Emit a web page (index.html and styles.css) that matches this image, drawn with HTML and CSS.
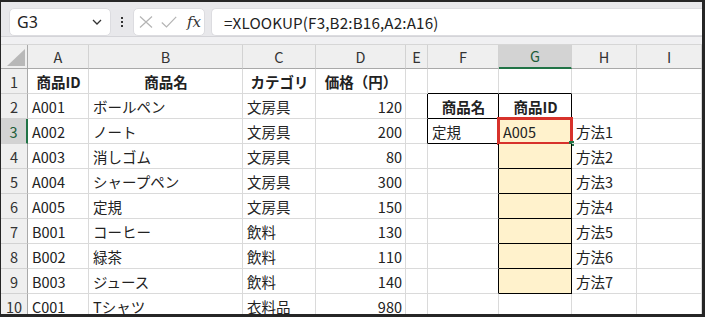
FILE: index.html
```html
<!DOCTYPE html>
<html lang="ja">
<head>
<meta charset="utf-8">
<link rel="stylesheet" href="styles.css">
</head>
<body>
<div class="frame">
  <div class="toolbar">
    <div class="namebox">
      <span class="name">G3</span>
      <svg class="chev" width="10" height="6" viewBox="0 0 10 6"><path d="M1 1 L5 5 L9 1" fill="none" stroke="#333" stroke-width="1.3"/></svg>
    </div>
    <div class="dots"><i></i><i></i><i></i></div>
    <div class="fxbox">
      <svg width="14" height="12" viewBox="0 0 14 12"><path d="M1 0.5 L13 11.5 M13 0.5 L1 11.5" stroke="#b4b4b4" stroke-width="1.2" fill="none"/></svg>
      <svg width="16" height="12" viewBox="0 0 16 12"><path d="M0.8 6.5 L5.5 11 L15.2 0.8" stroke="#b4b4b4" stroke-width="1.2" fill="none"/></svg>
      <span class="fx">fx</span>
    </div>
    <div class="formula">=XLOOKUP(F3,B2:B16,A2:A16)</div>
  </div>
  <div class="band"></div>
  <div class="sheet">
    <div class="corner"><svg width="18" height="17" viewBox="0 0 18 17"><path d="M0 17 L18 17 L18 0 Z" fill="#b8b8b8"/></svg></div>
    <div class="ch">A</div><div class="ch">B</div><div class="ch">C</div><div class="ch">D</div><div class="ch">E</div><div class="ch">F</div><div class="ch sel">G</div><div class="ch">H</div><div class="ch">I</div>

    <div class="rh">1</div>
    <div class="c b ctr">商品ID</div><div class="c b ctr">商品名</div><div class="c b ctr">カテゴリ</div><div class="c b ctr">価格（円）</div><div class="c"></div><div class="c kb"></div><div class="c kb"></div><div class="c"></div><div class="c"></div>

    <div class="rh">2</div>
    <div class="c">A001</div><div class="c">ボールペン</div><div class="c">文房具</div><div class="c num">120</div><div class="c kr"></div><div class="c b ctr kr kb">商品名</div><div class="c b ctr kr kb">商品ID</div><div class="c"></div><div class="c"></div>

    <div class="rh rsel">3</div>
    <div class="c">A002</div><div class="c">ノート</div><div class="c">文房具</div><div class="c num">200</div><div class="c kr"></div><div class="c kr kb">定規</div><div class="c kr kb fill active">A005<span class="redbox"></span><span class="handle"></span></div><div class="c">方法1</div><div class="c"></div>

    <div class="rh">4</div>
    <div class="c">A003</div><div class="c">消しゴム</div><div class="c">文房具</div><div class="c num">80</div><div class="c"></div><div class="c kr"></div><div class="c kr kb fill"></div><div class="c">方法2</div><div class="c"></div>

    <div class="rh">5</div>
    <div class="c">A004</div><div class="c">シャープペン</div><div class="c">文房具</div><div class="c num">300</div><div class="c"></div><div class="c kr"></div><div class="c kr kb fill"></div><div class="c">方法3</div><div class="c"></div>

    <div class="rh">6</div>
    <div class="c">A005</div><div class="c">定規</div><div class="c">文房具</div><div class="c num">150</div><div class="c"></div><div class="c kr"></div><div class="c kr kb fill"></div><div class="c">方法4</div><div class="c"></div>

    <div class="rh">7</div>
    <div class="c">B001</div><div class="c">コーヒー</div><div class="c">飲料</div><div class="c num">130</div><div class="c"></div><div class="c kr"></div><div class="c kr kb fill"></div><div class="c">方法5</div><div class="c"></div>

    <div class="rh">8</div>
    <div class="c">B002</div><div class="c">緑茶</div><div class="c">飲料</div><div class="c num">110</div><div class="c"></div><div class="c kr"></div><div class="c kr kb fill"></div><div class="c">方法6</div><div class="c"></div>

    <div class="rh">9</div>
    <div class="c">B003</div><div class="c">ジュース</div><div class="c">飲料</div><div class="c num">140</div><div class="c"></div><div class="c kr"></div><div class="c kr kb fill"></div><div class="c">方法7</div><div class="c"></div>

    <div class="rh">10</div>
    <div class="c">C001</div><div class="c">Tシャツ</div><div class="c">衣料品</div><div class="c num">980</div><div class="c"></div><div class="c"></div><div class="c"></div><div class="c"></div><div class="c"></div>
  </div>
</div>
</body>
</html>
```

FILE: styles.css
```css
* { box-sizing: border-box; }
html, body { margin: 0; padding: 0; }
body {
  width: 705px;
  height: 317px;
  overflow: hidden;
  background: #262626;
  font-family: "Noto Sans CJK JP", "Noto Sans", sans-serif;
}
.frame {
  width: 705px;
  height: 317px;
  border-top: 2px solid #262626;
  border-left: 1px solid #262626;
  border-right: 3px solid #262626;
  border-bottom: 3px solid #262626;
  background: #ffffff;
  overflow: hidden;
  display: flex;
  flex-direction: column;
}
.toolbar {
  flex-shrink: 0;
  background: #e8e8eb;
  display: flex;
  align-items: stretch;
  height: 35px;
  padding: 6px 0 0 8px;
  border-bottom: 1px solid #d4d4d8;
}
.namebox {
  width: 102px;
  background: #fff;
  border: 1px solid #dcdce0;
  border-radius: 5px;
  display: flex;
  align-items: center;
  justify-content: space-between;
  padding: 0 8px 0 7px;
  color: #222;
}
.name { font-family: "Noto Sans", sans-serif; font-size: 16px; }
.dots {
  width: 22px;
  display: flex;
  flex-direction: column;
  align-items: center;
  justify-content: center;
  gap: 2px;
}
.dots i { display: block; width: 2px; height: 2px; background: #333; }
.fxbox {
  width: 72px;
  background: #fff;
  border: 1px solid #dcdce0;
  border-radius: 5px;
  display: flex;
  align-items: center;
  padding: 0 0 0 5px;
  gap: 8px;
}
.fx {
  font-family: "DejaVu Serif", "Liberation Serif", serif;
  font-style: italic;
  font-size: 15px;
  color: #333;
  margin-left: 2px;
}
.formula {
  flex: 1;
  margin-left: 6px;
  background: #fff;
  border: 1px solid #dcdce0;
  border-right: none;
  border-radius: 5px 0 0 5px;
  display: flex;
  align-items: center;
  padding-left: 12px;
  font-size: 15.2px;
  color: #222;
  letter-spacing: 0.15px;
}
.band {
  flex-shrink: 0;
  height: 8px;
  background: #f0f0f2;
  border-bottom: 1px solid #d6d6d6;
}
.sheet {
  flex-shrink: 0;
  display: grid;
  grid-template-columns: 27px 61px 154px 73px 90px 22px 71px 73px 65px 1fr;
  grid-template-rows: 24px repeat(10, 25px);
  font-size: 14.5px;
  color: #222;
}
.corner {
  background: #efefef;
  border-right: 1px solid #a9a9a9;
  border-bottom: 1px solid #a9a9a9;
  display: flex;
  align-items: flex-end;
  justify-content: flex-end;
  padding: 0 2px 2px 0;
}
.ch {
  background: #efefef;
  border-right: 1px solid #d2d2d2;
  border-bottom: 1px solid #a9a9a9;
  display: flex;
  align-items: center;
  justify-content: center;
  color: #333;
  font-size: 14.5px;
  padding-bottom: 1px;
}
.ch.sel {
  background: #d3d3d3;
  color: #1e5e3a;
  border-bottom: 2px solid #217346;
}
.rh {
  background: #efefef;
  border-right: 1px solid #a9a9a9;
  border-bottom: 1px solid #d2d2d2;
  display: flex;
  align-items: center;
  justify-content: center;
  color: #333;
  padding-top: 1px;
}
.rh.rsel {
  background: #d3d3d3;
  color: #1e5e3a;
  border-right: 2px solid #217346;
}
.c {
  position: relative;
  border-right: 1px solid #dadada;
  border-bottom: 1px solid #dadada;
  display: flex;
  align-items: center;
  padding: 1px 3px 0 4px;
  white-space: nowrap;
  overflow: visible;
}
.c.b { font-weight: bold; }
.c.ctr { justify-content: center; }
.c.num { justify-content: flex-end; }
.c.kr { border-right-color: #000; }
.c.kb { border-bottom-color: #000; }
.c.fill { background: #fff2cc; }
.redbox {
  position: absolute;
  left: -2px;
  top: -2px;
  width: 76px;
  height: 28px;
  border: 3px solid #d7322b;
  pointer-events: none;
}
.handle {
  position: absolute;
  right: -3px;
  bottom: -3px;
  width: 5px;
  height: 5px;
  background: #217346;
}
```
